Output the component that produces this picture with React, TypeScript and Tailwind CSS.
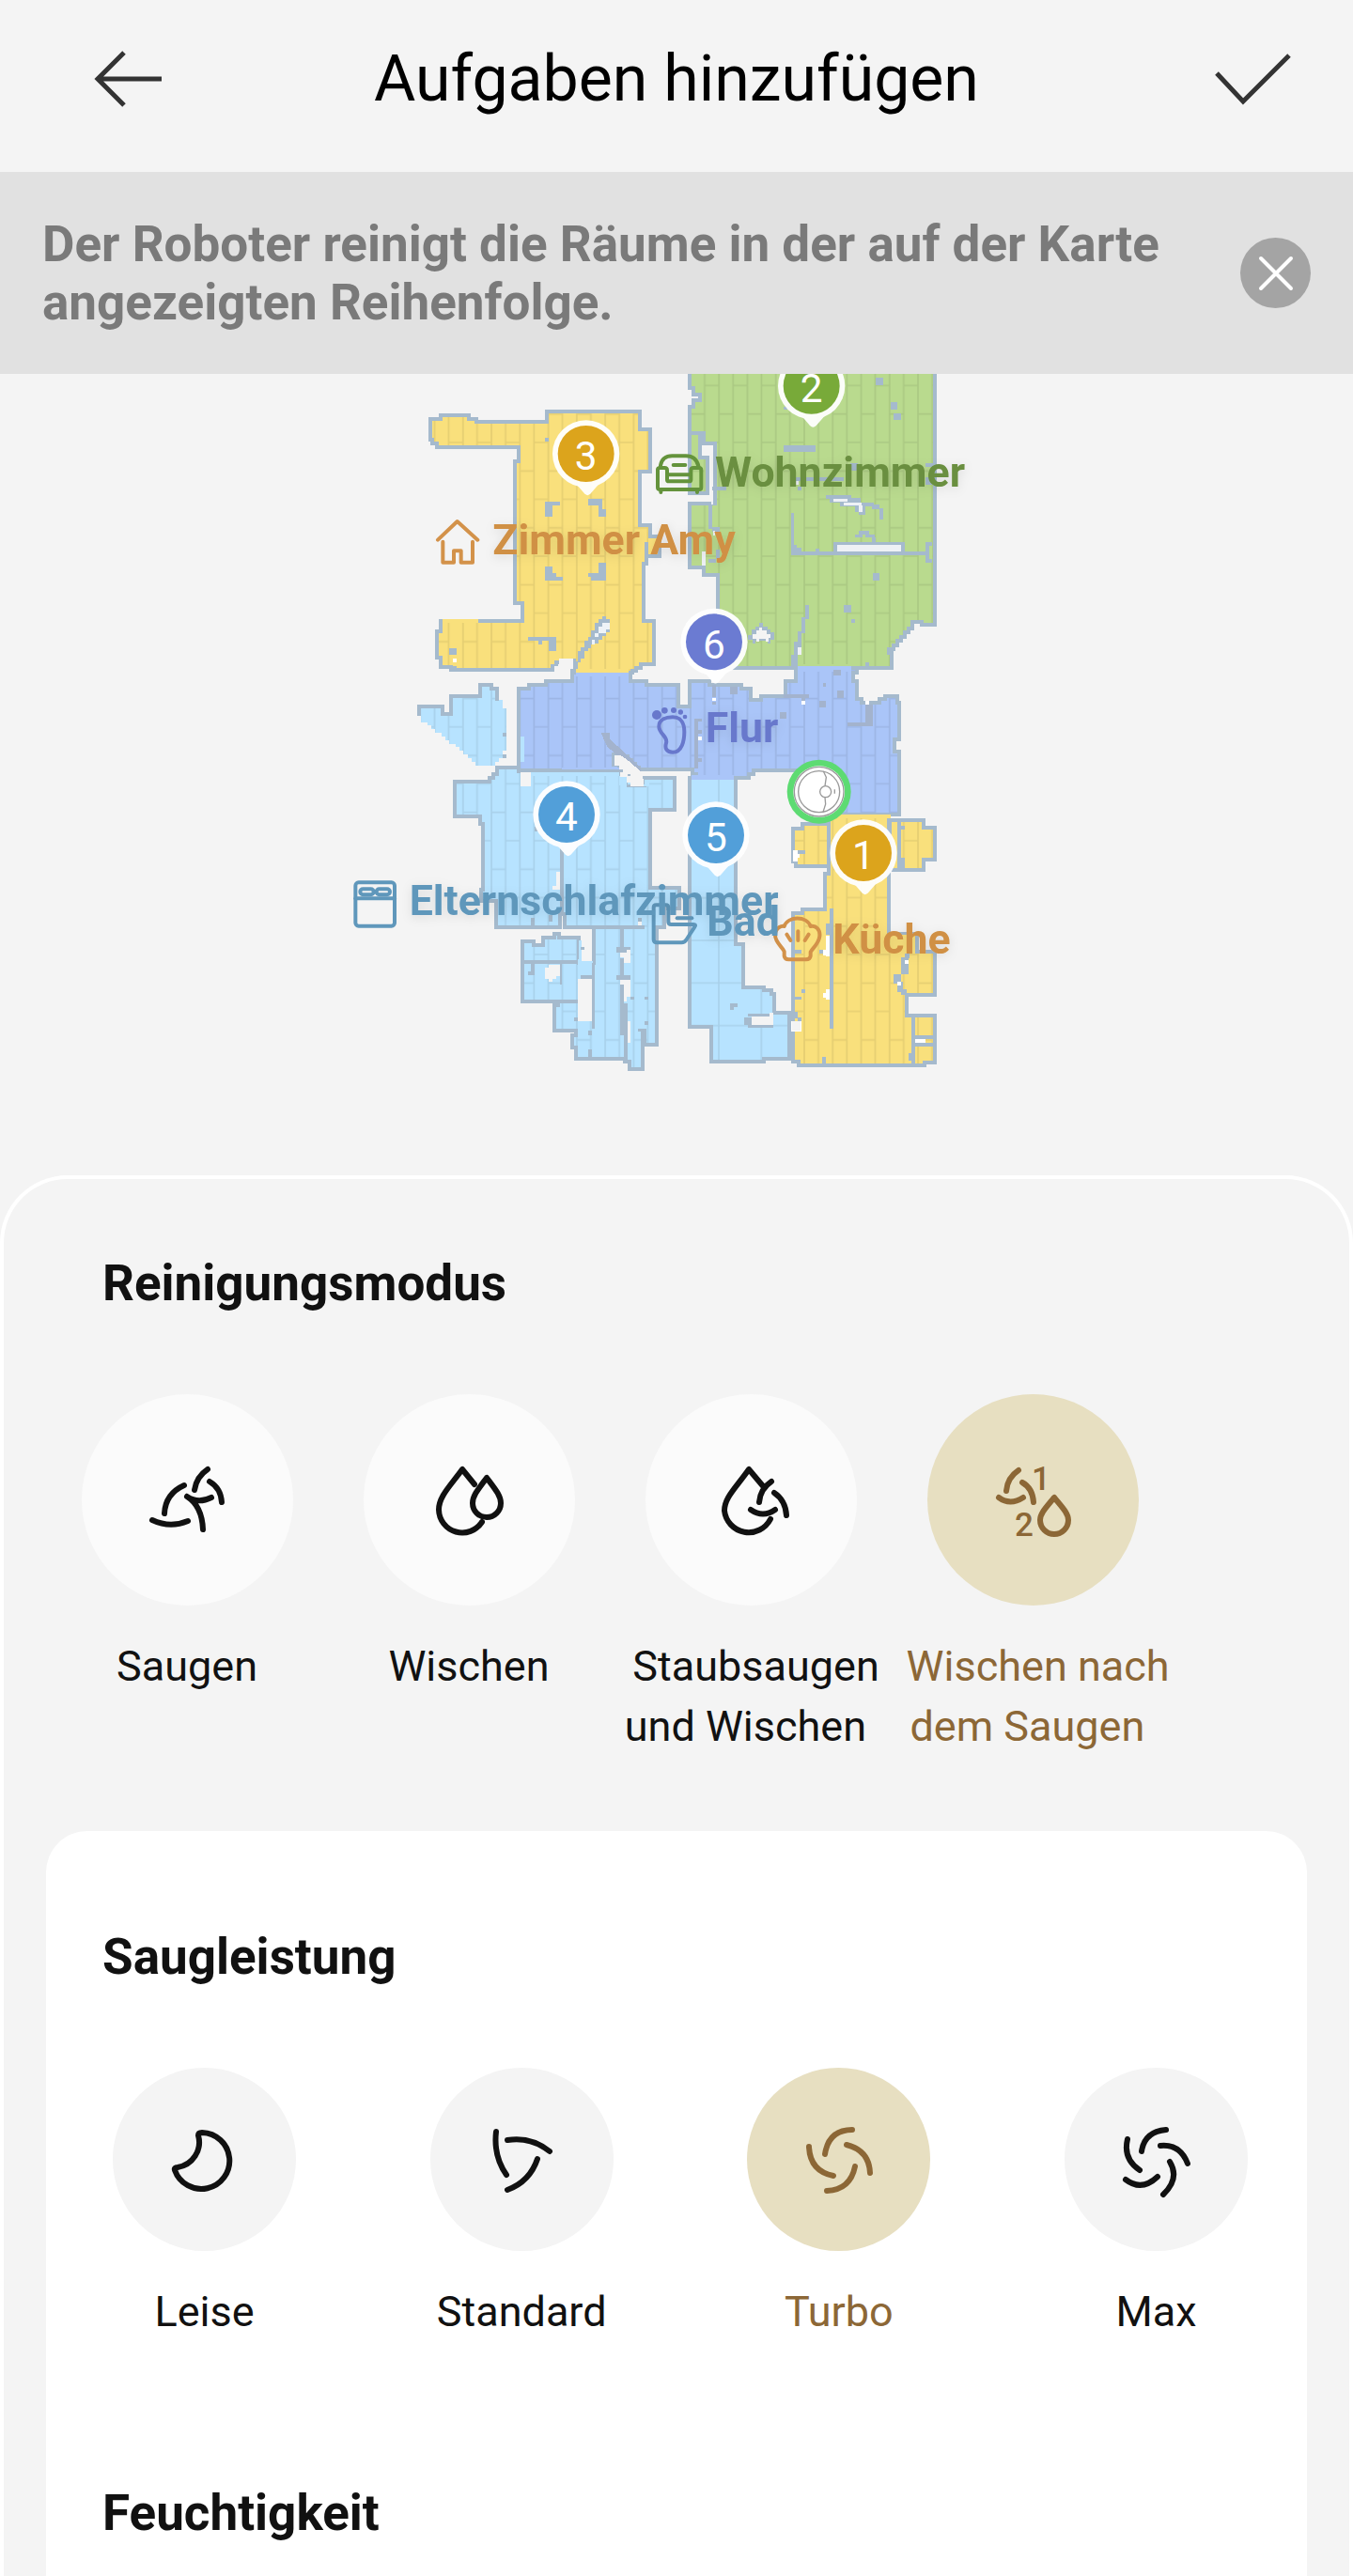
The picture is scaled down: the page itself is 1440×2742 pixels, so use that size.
import React, { useState } from "react";

const WALL = "#a5bacd";
const PAGE = "#f4f4f4";

type Rect = [number, number, number, number];

function Room({
  d,
  fill,
  border = true,
  pattern = "url(#planks)",
}: {
  d: string;
  fill: string;
  border?: boolean;
  pattern?: string;
}) {
  return (
    <>
      <path d={d} fill={fill} />
      <path d={d} fill={pattern} />
      {border && <path d={d} fill="none" stroke={WALL} strokeWidth={12} />}
    </>
  );
}

function Rects({ items, fill = WALL }: { items: Rect[]; fill?: string }) {
  return (
    <>
      {items.map(([x, y, w, h], i) => (
        <rect key={i} x={x} y={y} width={w} height={h} fill={fill} />
      ))}
    </>
  );
}

function Pin({ x, y, fill, n }: { x: number; y: number; fill: string; n: number }) {
  return (
    <g transform={`translate(${x} ${y})`}>
      <g fill="#fff" opacity={0.95}>
        <circle r={107} />
        <path d="M-30 98 L-5 127 Q5 138 15 127 L42 96 Z" />
      </g>
      <circle r={90} fill={fill} />
      <text y={52} textAnchor="middle" fontSize={127} fill="#fff">
        {n}
      </text>
    </g>
  );
}

const YELLOW = "#f9e07c";
const GREEN = "#b9da8e";
const INDIGO = "#aac5f8";
const SKY = "#b7e3ff";

const patterns = [
  { id: "planks", x: 580, y: 61 },
  { id: "planksLow", x: 580, y: -869 },
  { id: "planksEast", x: -410, y: 61 },
  { id: "planksSouthEast", x: -410, y: -869 },
];

function FloorPlan() {
  return (
    <svg
      viewBox="0 24 2160 2559"
      role="img"
      aria-label="Karte"
      className="mx-auto block h-[853px] w-[720px] max-w-full"
      fontFamily="Roboto, sans-serif"
    >
      <defs>
        {patterns.map((p) => (
          <pattern key={p.id} id={p.id} x={p.x} y={p.y} width={90.8} height={181.7} patternUnits="userSpaceOnUse">
            <path
              d="M0 0V182M45 0V182M90.8 0V182M45 0H91M45 181.7H91M0 91H45"
              stroke="#000"
              strokeOpacity={0.08}
              strokeWidth={5}
              fill="none"
            />
          </pattern>
        ))}
        <pattern id="tiles" x={225} y={903} width={136} height={136} patternUnits="userSpaceOnUse">
          <path d="M0 0H136M0 0V136M136 0V136M0 136H136" stroke="#000" strokeOpacity={0.08} strokeWidth={5} fill="none" />
        </pattern>
        <filter id="glow" x="-20%" y="-50%" width="140%" height="200%">
          <feDropShadow dx={0} dy={8} stdDeviation={16} floodColor="#000" floodOpacity={0.1} />
        </filter>
      </defs>

      {/* Flur */}
      <g transform="translate(0 930)" shapeRendering="crispEdges">
        <Room
          fill={INDIGO}
          pattern="url(#planksLow)"
          d="M576 360V98H608V87H664V76H747V40H932V76H985V87H1085V157H1122V76H1185V87H1288V98H1318V135H1350V123H1427V76H1460V24H1655V48H1645V75H1657V133H1670V145H1728V133H1745V123H1785V143H1791V262H1776V300H1791V500H1570V360H1325V372H1310V384H1143V372H1132V358H960V350H948V338H936V326H924V315H905V308H878V342H898V362Z"
        />
        <path d="M838 240H868V262L900 290L965 350V364H948L860 285Z" fill="#a3b3cd" />
        <path d="M715 365H898V352H715Z" fill={INDIGO} />
        <path d="M882 312H902L922 326L965 362H898V345H882Z" fill={PAGE} />
      </g>

      {/* Zimmer Amy */}
      <g shapeRendering="crispEdges">
        <Room
          fill={YELLOW}
          d="M294 168H328V156H418V168H440V178H666V145H962V201H995V336H963V508H995V568H985V630H975V812H1008V950H965V962H950V972H938V978H752V938H710V946H697V957H685V970H360V960H326V930H315V845H328V812H588V756H564V302H575V258H315V246H300V235H294Z"
        />
        <path d="M758 966H928V978H758Z" fill={YELLOW} />
        <path d="M758 978H928V990H758Z" fill={INDIGO} />
        <path d="M334 807H446V820H334Z" fill={YELLOW} />
        <path d="M690 964V957H704V934H750V975H690Z" fill={PAGE} />
        <path d="M990 544H1026V606H990" fill={YELLOW} stroke={WALL} strokeWidth={12} />
        <path d="M843 798H854V808H867V850H856V862H844V874H832V886H818V888H808V900H797V910H786V934H774V946H764V966H752V1010H741V965H752V942H764V910H775V898H786V876H797V864H808V842H820V820H832V808H843Z" fill={WALL} />
        <path d="M843 820H866V840H854V852H832V864H820V887H809V872H820V853H832V832H843Z" fill="#eef3f7" />
        <Rects
          items={[
            [660, 432, 48, 11], [660, 432, 23, 48], [798, 423, 46, 20], [832, 440, 11, 20], [832, 456, 22, 24],
            [660, 640, 23, 44], [683, 660, 12, 24], [695, 672, 22, 12], [832, 627, 22, 57], [808, 660, 24, 24],
            [798, 660, 10, 12], [606, 864, 90, 12], [672, 864, 24, 45], [638, 876, 12, 11], [354, 899, 24, 22],
            [660, 228, 11, 12], [366, 957, 12, 12],
          ]}
        />
        <rect x={366} y={933} width={12} height={12} fill="#fff" />
      </g>

      {/* Wohnzimmer */}
      <g transform="translate(990 0)" shapeRendering="crispEdges">
        <Room fill={GREEN} pattern="url(#planksEast)" d="M133 213V405H190V290H165V213Z" />
        <Room
          fill={GREEN}
          pattern="url(#planksEast)"
          d="M133 10V68H145V90H165V108H145V130H133V213H178V245H213V437H133V642H178V665H222V962H778V915H768V902H784V890H795V876H807V864H820V850H832V836H843V815H872V825H915V10Z"
        />
        <path d="M478 950H648V958H478Z" fill={GREEN} />
        <path d="M478 958H648V976H478Z" fill={INDIGO} />
        <Rects
          items={[
            [726, 37, 23, 23], [774, 115, 20, 22], [783, 151, 23, 20], [432, 128, 12, 10], [432, 252, 102, 20],
            [645, 310, 24, 22], [885, 310, 24, 12], [885, 354, 24, 24], [468, 354, 155, 11], [478, 385, 12, 12],
            [205, 385, 44, 12], [192, 440, 12, 80], [204, 514, 24, 14], [192, 616, 24, 12], [215, 584, 14, 32],
            [455, 467, 10, 130], [455, 592, 440, 12], [463, 570, 12, 24], [475, 580, 14, 14], [534, 583, 12, 12],
            [592, 560, 226, 32], [885, 560, 22, 66], [566, 411, 82, 12], [578, 420, 100, 14], [613, 434, 80, 14],
            [660, 440, 34, 24], [672, 464, 22, 10], [690, 434, 30, 14], [715, 440, 24, 16], [737, 454, 12, 34],
            [660, 537, 24, 8], [672, 526, 34, 10], [694, 537, 30, 8], [715, 545, 10, 15], [717, 660, 21, 23],
            [624, 762, 24, 24], [647, 806, 13, 12], [692, 945, 13, 14], [500, 762, 13, 44], [490, 800, 12, 52],
            [477, 845, 12, 60], [466, 880, 12, 75], [457, 920, 20, 44],
          ]}
        />
        <Rects
          fill="#eef1f5"
          items={[[603, 569, 204, 22], [590, 423, 46, 10], [624, 434, 58, 10], [672, 444, 12, 22], [468, 366, 12, 12], [477, 898, 12, 24], [200, 430, 8, 10], [172, 592, 12, 45], [206, 526, 8, 14]]}
        />
        <rect x={896} y={572} width={10} height={44} fill={GREEN} />
        <path d="M318 858H330V840H342V830H354V820H367V830H380V840H390V850H403V873H390V886H380V876H342V884H332V874H318Z" fill={WALL} />
        <path d="M332 854H344V842H354V834H364V844H378V854H390V866H384V880H376V870H354V880H344V870H332Z" fill={PAGE} />
      </g>

      {/* Elternschlafzimmer */}
      <g transform="translate(0 930)" shapeRendering="crispEdges">
        <Room
          fill={SKY}
          pattern="url(#planksLow)"
          border={false}
          d="M258 155H333V180H360V123H452V87H490V98H508V135H525V163H536V298H524V320H512V333H500V345H438V332H426V320H414V308H400V297H388V286H376V275H354V263H342V251H330V240H308V228H297V216H286V206H264V185H258Z"
        />
        <path d="M258 185V155H333V180H360V123H452V87H490V98H508V137" fill="none" stroke={WALL} strokeWidth={12} />
        <Room
          fill={SKY}
          pattern="url(#planksLow)"
          d="M373 395H482V384H496V372H508V350H575V362H903V378H926V408H978V385H1075V485H997V735H1088V800H1040V860H1018V1237H978V1190H972V1313H930V1290H915V1280H758V1245H747V1205H758V1190H690V1110H702V1098H588V905H625V917H655V893H690V882H705V893H768V975H815V860H724V820H707V860H505V778H455V740H461V530H452V507H373Z"
        />
        <path d="M582 366H898V378H582Z" fill={SKY} />
        <path d="M898 378H925V404H978V390H992V412H934V400H920V408H898Z" fill={SKY} />
        <path d="M900 366H925V378H936V388H976V412H934V400H922V380H900Z" fill={PAGE} />
        <path d="M768 902H776V968H812V1015H765V962H768Z" fill={SKY} />
        <Rects
          items={[
            [576, 354, 138, 11], [707, 605, 12, 215], [590, 966, 176, 12], [588, 1092, 178, 12], [809, 975, 11, 210],
            [719, 854, 258, 12], [900, 860, 12, 72], [888, 925, 46, 16], [900, 960, 12, 58], [774, 1014, 46, 12],
            [888, 1014, 46, 14], [900, 1045, 11, 160], [911, 1105, 12, 180], [707, 975, 8, 70], [614, 978, 12, 36],
            [606, 1002, 14, 12], [775, 924, 12, 10], [798, 1190, 12, 16], [798, 1250, 12, 30], [933, 1083, 11, 10],
            [977, 1083, 12, 10], [977, 1161, 12, 12], [752, 1150, 12, 10], [956, 1185, 20, 10], [525, 240, 12, 12],
            [525, 309, 12, 12], [614, 832, 12, 22], [672, 822, 12, 20], [628, 540, 8, 16], [956, 832, 12, 12],
          ]}
        />
        <path d="M582 366H615V411H582ZM697 685H708V740H684V730H697ZM660 990H672V980H708V1016H696V1026H684V1036H672V1026H660ZM765 1026H809V1160H765ZM900 942H922V932H932V976H912V958H900ZM900 1028H932V1084H922V1098H912V1045H900ZM924 1160H932V1230H924ZM956 844H968V854H956Z" fill={PAGE} />
        <path d="M583 252H594V332H583Z" fill={SKY} />
      </g>

      {/* Bad and Küche */}
      <g transform="translate(990 930)" shapeRendering="crispEdges">
        <Room
          fill={SKY}
          pattern="url(#tiles)"
          d="M133 385H280V915H302V1052H370V1063H392V1075H403V1133H450V1280H370V1290H200V1178H133Z"
        />
        <path d="M139 376H274V391H139Z" fill={INDIGO} />
        <path d="M456 1195H467V1280H456Z" fill={SKY} />
        <Rects items={[[307, 1148, 23, 24], [318, 1136, 70, 10], [262, 1104, 24, 11], [262, 1104, 12, 22], [318, 1168, 80, 14]]} />
        <path d="M330 1147H388V1134H400V1172H330Z" fill={PAGE} />

        <Room fill={YELLOW} pattern="url(#planksSouthEast)" d="M493 530H576V665H472V652H463V545H493Z" />
        <Room fill={YELLOW} pattern="url(#planksSouthEast)" d="M770 518H880V543H915V645H880V677H770Z" />
        <Room
          fill={YELLOW}
          pattern="url(#planksSouthEast)"
          d="M580 506H768V882H858V938H915V1077H826V1143H915V1293H882V1302H480V1290H461V815H493V805H565V690H576V506Z"
        />
        <path d="M588 500H774V514H588Z" fill={YELLOW} />
        <path d="M762 520H774V876H762Z" fill={WALL} />
        <Rects
          items={[
            [795, 524, 12, 155], [807, 538, 11, 12], [807, 640, 12, 40], [580, 800, 11, 385], [568, 848, 12, 36],
            [474, 615, 26, 12], [463, 933, 26, 11], [488, 1059, 12, 12], [463, 1083, 26, 10], [463, 1130, 14, 22],
            [477, 1148, 12, 14], [546, 932, 14, 12], [556, 1275, 12, 20], [840, 1143, 12, 155], [830, 1262, 14, 26],
            [846, 1206, 64, 11], [846, 1231, 64, 11], [808, 956, 22, 55], [784, 1012, 24, 28], [796, 1035, 16, 32],
            [808, 1060, 18, 18], [820, 944, 14, 16],
          ]}
        />
        <path d="M800 885H852V934H842V944H820V956H808V990H796V1012H784V884Z" fill={YELLOW} />
        <Rects
          fill="#fff"
          items={[[463, 615, 14, 36], [465, 628, 18, 10], [557, 932, 10, 20], [566, 888, 12, 66], [557, 1070, 12, 16], [568, 1059, 11, 34], [852, 1217, 34, 13], [818, 966, 12, 12], [796, 1035, 10, 12], [456, 1160, 33, 34]]}
        />
        <rect x={460} y={1162} width={26} height={30} fill={PAGE} />
        <Rects
          fill="#a3b3cd"
          items={[
            [590, 38, 24, 20], [557, 80, 10, 12], [603, 105, 20, 24], [546, 138, 22, 22], [432, 117, 80, 11], [420, 174, 22, 20],
            [205, 87, 10, 38], [205, 140, 10, 10], [262, 92, 24, 24], [148, 195, 22, 10], [148, 205, 10, 150], [158, 232, 12, 10],
            [158, 320, 12, 12], [694, 150, 22, 62], [635, 206, 82, 12], [488, 128, 14, 10],
          ]}
        />
        <Rects fill="#fff" items={[[205, 128, 11, 11], [160, 251, 11, 13], [488, 139, 13, 12], [694, 139, 11, 11]]} />
      </g>

      {/* room icons */}
      <g fill="none" strokeLinecap="round" strokeLinejoin="round" strokeWidth={12}>
        <g stroke="#d3924a">
          <path d="M318 554L380 495L445 554" />
          <path d="M334 560V626H369V589H392V626H429V560" />
        </g>
        <g stroke="#5f97bb" transform="translate(0 930)">
          <rect x={55} y={718} width={125} height={139} rx={10} />
          <path d="M55 769H180" />
          <rect x={70} y={739} width={43} height={18} rx={9} />
          <rect x={122} y={739} width={43} height={18} rx={9} />
        </g>
        <g stroke="#64933c" transform="translate(990 0)">
          <path d="M39 322V316Q45 286 76 286H120Q152 286 160 318V322" />
          <path d="M30 386V330Q30 324 38 324H52Q60 324 60 332V362Q60 367 66 367H130Q136 367 136 362V332Q136 324 144 324H162Q169 324 169 332V386Q169 393 162 393H38Q30 393 30 386Z" />
          <path d="M80 315H118M62 346H134M40 396V402M156 396V402" />
        </g>
        <g transform="translate(990 930)">
          <g stroke="#6878cc">
            <path d="M34 220C34 198 56 190 78 190C106 190 115 212 115 236C115 264 108 302 78 302C58 302 52 290 57 273C64 252 34 244 34 220Z" />
            <g fill="#6878cc" stroke="none">
              <circle cx={27} cy={183} r={15} />
              <circle cx={52} cy={169} r={10} />
              <circle cx={81} cy={168} r={9} />
              <circle cx={103} cy={174} r={8} />
              <circle cx={117} cy={189} r={7} />
            </g>
          </g>
          <g stroke="#5f97bb">
            <path d="M25 790H56Q64 790 64 798V843Q64 852 73 852H144Q154 852 148 860L122 900Q116 910 106 910H28Q17 910 17 900V798Q17 790 25 790Z" />
            <path d="M92 832H139" />
          </g>
          <g stroke="#d3924a">
            <path d="M434 938C428 924 403 908 405 884C407 860 428 856 434 858C446 824 506 824 518 858C534 854 550 868 547 890C544 914 524 928 518 940V953Q516 964 504 964H448Q436 964 434 953Z" />
            <path d="M442 884L454 903M478 874V903M512 884L500 903" />
          </g>
        </g>
      </g>

      {/* robot */}
      <g transform="translate(1535 1358)">
        <circle r={102} fill="#5ddb72" />
        <circle r={82} fill="#fff" />
        <g fill="none" stroke="#999" strokeWidth={4}>
          <circle r={79} />
          <circle r={66} />
          <path d="M14 -65L23 -46L19 -18M19 18L21 40L13 65M50 -7V6" />
          <circle cx={21} r={18} fill="#fff" />
        </g>
      </g>

      <Pin x={1511} y={62} n={2} fill="#78aa39" />
      <Pin x={791} y={279} n={3} fill="#dca41c" />
      <Pin x={1200} y={880} n={6} fill="#6b7bd2" />
      <Pin x={729} y={1431} n={4} fill="#529fd9" />
      <Pin x={1206} y={1497} n={5} fill="#529fd9" />
      <Pin x={1677} y={1554} n={1} fill="#dca41c" />

      <g fontSize={134} fontWeight={700} filter="url(#glow)">
        <text x={1203} y={384} fill="#6a8f3f">Wohnzimmer</text>
        <text x={493} y={600} fill="#d09044">Zimmer Amy</text>
        <text x={1172} y={1200} fill="#6878cc">Flur</text>
        <text x={227} y={1752} fill="#5f97bb">Elternschlafzimmer</text>
        <text x={1177} y={1817} fill="#5f97bb">Bad</text>
        <text x={1579} y={1875} fill="#d09044">Küche</text>
      </g>
    </svg>
  );
}

const icons: Record<string, React.ReactNode> = {
  saugen: (
    <path d="M72 17Q60 25 58 39M74 30Q86 37 87 52M50 46Q62 54 76 47M50 46Q66 56 67 81M47 34Q27 43 26 64M13 71Q32 80 51 72" />
  ),
  wischen: (
    <>
      <path d="M56 33L43 17C30 35 18 46 18 60A25 25 0 0 0 64 73" />
      <path d="M69 26C60 38 54 45 54 53A15 15 0 0 0 84 53C84 45 78 38 69 26Z" />
    </>
  ),
  beides: (
    <path d="M64 36L48 17C34 37 22 47 22 61A26 26 0 0 0 71 70M72 30Q60 38 59 52M50 60Q63 69 76 60M75 42Q87 50 88 66" />
  ),
  nacheinander: (
    <>
      <path d="M35 18Q23 26 22 40M39 31Q50 37 51 52M14 47Q26 56 40 47" />
      <path d="M73 47C64 58 58 64 58 71A15 15 0 0 0 88 71C88 64 82 58 73 47Z" />
      <g fill="currentColor" stroke="none" fontFamily="Roboto, sans-serif" fontWeight={500} fontSize={35}>
        <text x={49} y={39}>1</text>
        <text x={31} y={88}>2</text>
      </g>
    </>
  ),
  leise: <path d="M43 24Q43 21 47 21A30 30 0 1 1 18 61Q17 58 21 58A27 27 0 0 0 43 24Z" />,
  standard: <path d="M23 20Q20 46 34 66M35 29Q60 25 80 41M67 49Q59 73 35 82" />,
  turbo: <path d="M64 18Q39 18 35 44M58 34Q82 40 83 64M67 57Q62 82 37 83M18 36Q19 62 44 67" />,
  max: <path d="M61 18Q38 20 35 41M55 35Q76 33 84 54M65 52Q76 70 58 87M52 68Q35 84 18 71M20 28Q15 49 33 61" />,
};

function Glyph({ name }: { name: string }) {
  return (
    <svg
      viewBox="0 0 100 100"
      aria-hidden="true"
      className="size-[100px]"
      fill="none"
      stroke="currentColor"
      strokeWidth={6}
      strokeLinecap="round"
      strokeLinejoin="round"
    >
      {icons[name]}
    </svg>
  );
}

const modes = [
  { id: "saugen", label: "Saugen" },
  { id: "wischen", label: "Wischen" },
  { id: "beides", label: " Staubsaugen\nund Wischen " },
  { id: "nacheinander", label: " Wischen nach\ndem Saugen " },
];

const powers = [
  { id: "leise", label: "Leise" },
  { id: "standard", label: "Standard" },
  { id: "turbo", label: "Turbo" },
  { id: "max", label: "Max" },
];

export default function App() {
  const [mode, setMode] = useState("nacheinander");
  const [power, setPower] = useState("turbo");
  const [notice, setNotice] = useState(true);

  return (
    <div className="flex min-h-screen flex-col bg-[#f4f4f4] font-[Roboto,sans-serif] text-[#111]">
      <header className="flex h-[183px] items-center justify-between px-[60px] pb-4">
        <button aria-label="Zurück" className="flex h-[154px] w-[154px] items-center justify-center">
          <svg viewBox="0 0 80 70" className="h-[70px] w-20" fill="none" stroke="#333" strokeWidth={5}>
            <path d="M75 35H8M35 7L7 35L35 63" />
          </svg>
        </button>
        <h1 className="text-[68px] leading-20 text-black">Aufgaben hinzufügen</h1>
        <button aria-label="Bestätigen" className="flex h-[154px] w-[154px] items-center justify-end">
          <svg viewBox="0 0 90 60" className="h-[60px] w-[90px]" fill="none" stroke="#333" strokeWidth={5}>
            <path d="M5 24L33 54L82 5" />
          </svg>
        </button>
      </header>

      {notice && (
        <div className="flex h-[215px] items-center justify-between bg-[#e1e1e1] px-[45px]">
          <p className="w-[1220px] text-[53px] leading-[62px] font-bold text-[#7a7a7a]">
            Der Roboter reinigt die Räume in der auf der Karte angezeigten Reihenfolge.
          </p>
          <button
            aria-label="Hinweis schließen"
            onClick={() => setNotice(false)}
            className="flex size-[75px] shrink-0 items-center justify-center rounded-full bg-[#a4a4a4]"
          >
            <svg viewBox="0 0 40 40" className="size-10" stroke="#fff" strokeWidth={4} strokeLinecap="round">
              <path d="M4 4L36 36M36 4L4 36" />
            </svg>
          </button>
        </div>
      )}

      <main className="flex grow flex-col">
        <FloorPlan />

        <section className="flex grow flex-col rounded-t-[72px] border-x-4 border-t-4 border-white px-[45px]">
          <h2 className="mt-[79px] pl-[60px] text-[53px] leading-16 font-bold">Reinigungsmodus</h2>
          <div className="mt-[86px] flex">
            {modes.map((m) => {
              const on = m.id === mode;
              return (
                <button
                  key={m.id}
                  aria-pressed={on}
                  onClick={() => setMode(m.id)}
                  className={`flex w-[300px] flex-col items-center ${on ? "text-[#8c6736]" : "text-[#111]"}`}
                >
                  <span
                    className={`flex size-[225px] items-center justify-center rounded-full ${on ? "bg-[#e7dfc1]" : "bg-[#fbfbfb]"}`}
                  >
                    <Glyph name={m.id} />
                  </span>
                  <span className="mt-[33px] text-[45px] leading-16 whitespace-pre">{m.label}</span>
                </button>
              );
            })}
          </div>

          <div className="mt-[79px] grow rounded-t-[44px] bg-white">
            <h2 className="mt-[102px] pl-[60px] text-[53px] leading-16 font-bold">Saugleistung</h2>
            <div className="mt-[86px] flex justify-between pr-[63px] pl-[71px]">
              {powers.map((p) => {
                const on = p.id === power;
                return (
                  <button
                    key={p.id}
                    aria-pressed={on}
                    onClick={() => setPower(p.id)}
                    className={`flex w-[195px] flex-col items-center ${on ? "text-[#8c6736]" : "text-[#111]"}`}
                  >
                    <span
                      className={`flex size-[195px] items-center justify-center rounded-full ${on ? "bg-[#e7dfc1]" : "bg-[#f4f4f4]"}`}
                    >
                      <Glyph name={p.id} />
                    </span>
                    <span className="mt-[33px] text-[45px] leading-16">{p.label}</span>
                  </button>
                );
              })}
            </div>
            <h2 className="mt-[150px] pl-[60px] text-[53px] leading-16 font-bold">Feuchtigkeit</h2>
          </div>
        </section>
      </main>
    </div>
  );
}
